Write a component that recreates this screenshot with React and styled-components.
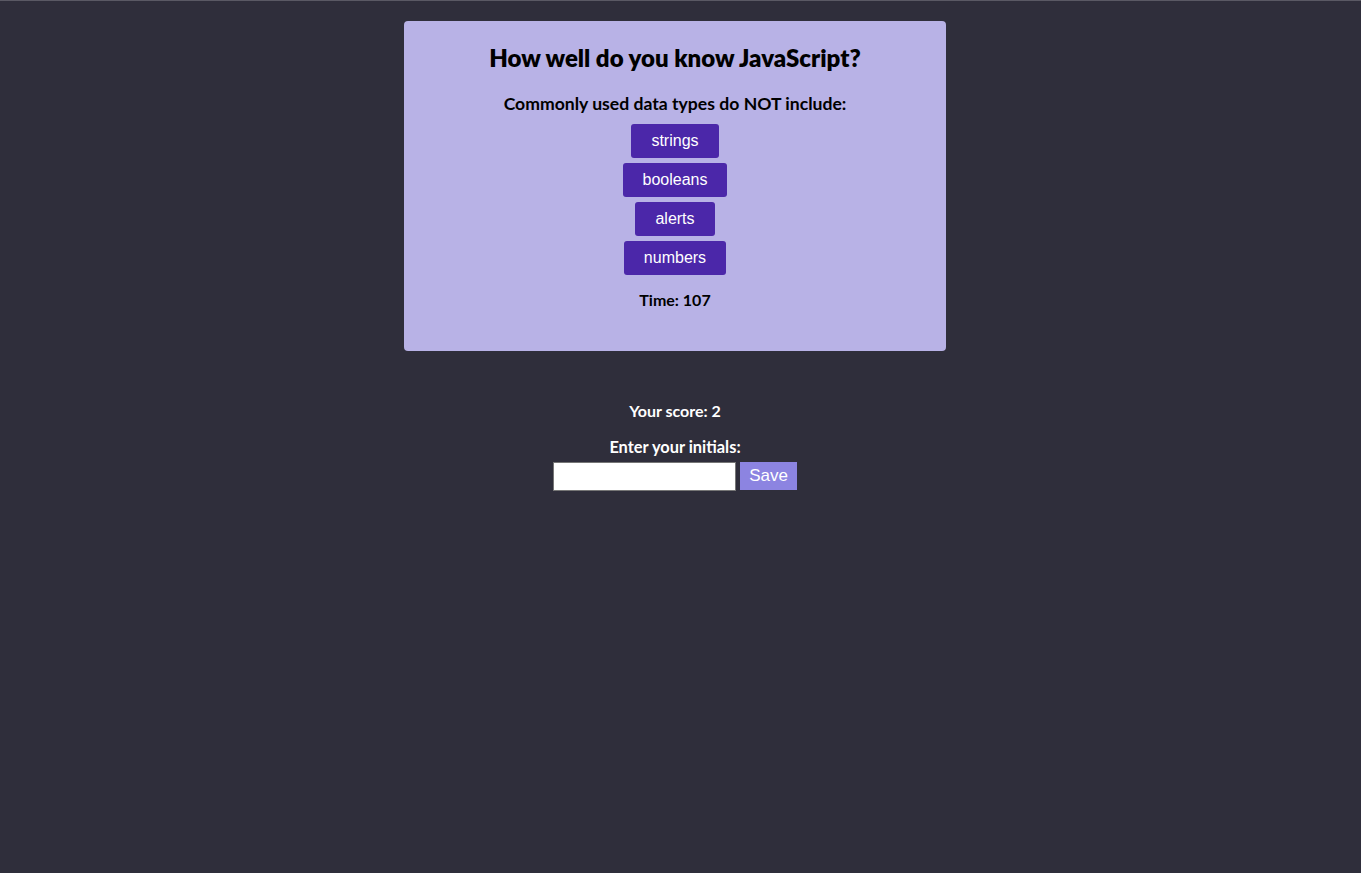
import React from "react";
import styled, { createGlobalStyle } from "styled-components";

const Global = createGlobalStyle`
  html, body {
    margin: 0;
    padding: 0;
    background: #2f2e3b;
  }
  body {
    border-top: 1px solid #5a5964;
    min-height: 872px;
    font-family: Lato, "Open Sans", sans-serif;
  }
`;

const Page = styled.main`
  display: flex;
  flex-direction: column;
  align-items: center;
  padding-top: 20px;
  padding-right: 11px;
`;

const Card = styled.section`
  width: 542px;
  box-sizing: border-box;
  background: #b8b2e6;
  border-radius: 4px;
  padding: 20px 20px 41px;
  display: flex;
  flex-direction: column;
  align-items: center;
  color: #000;
`;

const Title = styled.h1`
  margin: 0;
  font-size: 24px;
  font-weight: 800;
  line-height: 34px;
`;

const Question = styled.h2`
  margin: 17px 0 8px;
  font-size: 17.6px;
  font-weight: 700;
  line-height: 24px;
`;

const Choices = styled.div`
  display: flex;
  flex-direction: column;
  align-items: center;
  gap: 5px;
`;

const Choice = styled.button`
  font-family: "Liberation Sans", Arial, sans-serif;
  font-size: 16px;
  line-height: 18px;
  color: #fff;
  background: #4b27a9;
  border: none;
  border-radius: 3px;
  padding: 8px 20px;
  cursor: pointer;
`;

const Timer = styled.p`
  margin: 15px 0 0;
  font-size: 16px;
  font-weight: 700;
  line-height: 20px;
`;

const Result = styled.section`
  margin-top: 48px;
  display: flex;
  flex-direction: column;
  align-items: center;
  color: #fff;
`;

const Score = styled.p`
  margin: 0;
  font-size: 16px;
  font-weight: 700;
  line-height: 24px;
`;

const Label = styled.label`
  margin-top: 12px;
  font-size: 16.4px;
  font-weight: 700;
  line-height: 24px;
`;

const Form = styled.div`
  margin-top: 3px;
  display: flex;
  align-items: flex-start;
  gap: 4px;
`;

const Input = styled.input`
  width: 183px;
  height: 29px;
  box-sizing: border-box;
  border: 1px solid #767676;
  border-radius: 0;
  background: #fff;
  padding: 0 4px;
`;

const Save = styled.button`
  font-family: "Liberation Sans", Arial, sans-serif;
  font-size: 17px;
  color: #fff;
  background: #8c84e1;
  border: none;
  height: 28px;
  width: 57px;
  padding: 0;
`;

export default function App() {
  const choices = ["strings", "booleans", "alerts", "numbers"];
  return (
    <>
      <Global />
      <Page>
        <Card>
          <Title>How well do you know JavaScript?</Title>
          <Question>Commonly used data types do NOT include:</Question>
          <Choices>
            {choices.map((c) => (
              <Choice key={c}>{c}</Choice>
            ))}
          </Choices>
          <Timer>Time: 107</Timer>
        </Card>
        <Result>
          <Score>Your score: 2</Score>
          <Label htmlFor="initials">Enter your initials:</Label>
          <Form>
            <Input id="initials" type="text" />
            <Save>Save</Save>
          </Form>
        </Result>
      </Page>
    </>
  );
}
